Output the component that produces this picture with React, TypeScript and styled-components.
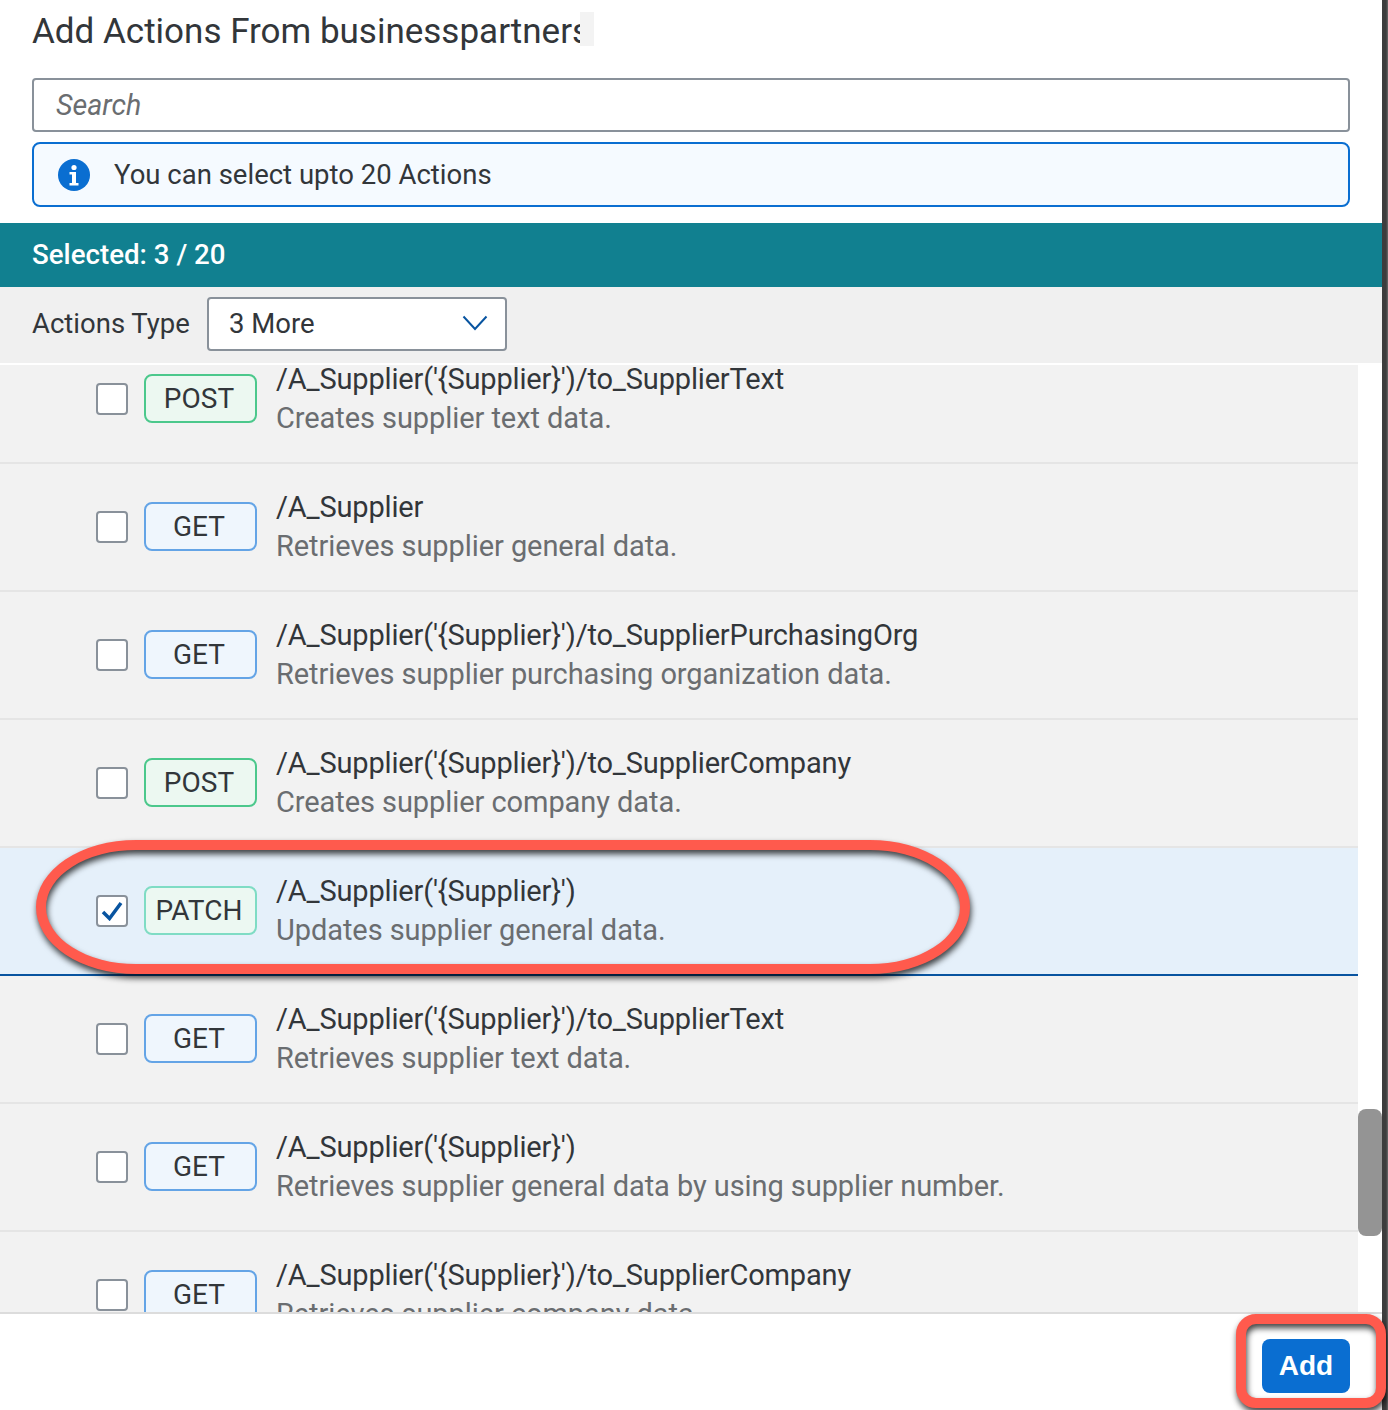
import React from "react";
import styled, { createGlobalStyle } from "styled-components";

const Global = createGlobalStyle`
  html, body { margin: 0; padding: 0; background: #fff; }
  body { font-family: Roboto, "Noto Sans", "Liberation Sans", sans-serif; color: #32363a; }
  * { box-sizing: border-box; }
`;

const Page = styled.div`
  position: relative;
  display: flex;
  width: 1388px;
  height: 1410px;
  overflow: hidden;
`;
const Dialog = styled.div`
  width: 1382px;
  height: 1410px;
  display: flex;
  flex-direction: column;
  background: #fff;
`;
const Edge = styled.div`
  width: 6px;
  background: linear-gradient(90deg, #3d3d3d 0 4px, #6a6a6a 100%);
`;
const Head = styled.div`
  height: 223px;
  padding: 12px 32px 0;
  display: flex;
  flex-direction: column;
`;
const TitleRow = styled.div`
  display: flex;
  height: 34px;
  margin-bottom: 32px;
`;
const Title = styled.h1`
  margin: 0;
  width: 548px;
  height: 40px;
  overflow: hidden;
  white-space: nowrap;
  font-weight: 400;
  font-size: 35px;
  line-height: 40px;
  color: #32363a;
`;
const TitleFade = styled.div`
  width: 14px;
  height: 34px;
  background: #f3f3f3;
`;
const SearchBox = styled.div`
  height: 54px;
  border: 2px solid #89919a;
  border-radius: 4px;
  padding: 0 22px;
  display: flex;
  align-items: center;
  font-style: italic;
  font-size: 28.600px;
  color: #6a6d70;
`;
const Info = styled.div`
  height: 65px;
  margin-top: 10px;
  border: 2px solid #0a6ed1;
  border-radius: 8px;
  background: #f5faff;
  display: flex;
  align-items: center;
  padding-left: 24px;
  gap: 24px;
  font-size: 27.500px;
`;
const SelectedBar = styled.div`
  height: 64px;
  background: #118090;
  color: #fff;
  padding: 0 0 2px 32px;
  display: flex;
  align-items: center;
  font-size: 27.700px;
  font-weight: 500;
`;
const FilterBar = styled.div`
  height: 76px;
  background: #f0f0f0;
  padding: 10px 0 0 32px;
  display: flex;
  align-items: flex-start;
  font-size: 27.500px;
`;
const FilterLabel = styled.span`
  width: 175px;
  line-height: 54px;
`;
const Select = styled.div`
  width: 300px;
  height: 54px;
  border: 2px solid #89919a;
  border-radius: 4px;
  background: #fff;
  display: flex;
  align-items: center;
  justify-content: space-between;
  padding: 0 17px 2px 20px;
`;
const Body = styled.div`
  height: 947px;
  margin-top: 2px;
  display: flex;
`;
const List = styled.div`
  width: 1358px;
  height: 947px;
  overflow: hidden;
`;
const ListInner = styled.div`
  margin-top: -29px;
`;
const Track = styled.div`
  width: 24px;
  padding-top: 744px;
`;
const Thumb = styled.div`
  height: 127px;
  background: #949494;
  border-radius: 8px;
`;
const Row = styled.div<{ $selected?: boolean }>`
  height: 128px;
  background: ${(p) => (p.$selected ? "#e5f0fa" : "#f2f2f2")};
  border-bottom: 2px solid ${(p) => (p.$selected ? "#0854a0" : "#e5e5e5")};
  display: flex;
  align-items: center;
  padding-left: 96px;
`;
const Check = styled.div`
  width: 32px;
  height: 32px;
  border: 2px solid #89919a;
  border-radius: 4px;
  background: #fff;
  margin-right: 16px;
  display: flex;
  align-items: center;
  justify-content: center;
`;
const tagColors: Record<string, [string, string]> = {
  POST: ["#4cc88c", "#ecf8f1"],
  GET: ["#64a4e6", "#eff6fd"],
  PATCH: ["#7fdcc4", "#ecf8f2"],
};
const Tag = styled.div<{ $method: string }>`
  width: 113px;
  height: 49px;
  margin-bottom: 2px;
  padding-right: 3px;
  border: 2px solid ${(p) => tagColors[p.$method][0]};
  background: ${(p) => tagColors[p.$method][1]};
  border-radius: 8px;
  margin-right: 19px;
  display: flex;
  align-items: center;
  justify-content: center;
  font-size: 28px;
`;
const RowText = styled.div`
  display: flex;
  flex-direction: column;
`;
const Path = styled.div`
  font-size: 29px;
  line-height: 39px;
  letter-spacing: -0.170px;
`;
const Desc = styled.div`
  font-size: 29px;
  line-height: 39px;
  letter-spacing: -0.070px;
  color: #6a6d70;
`;
const Footer = styled.div`
  flex: 1;
  border-top: 2px solid #dcdcdc;
  background: #fff;
  display: flex;
  justify-content: flex-end;
  align-items: flex-start;
  padding: 25px 32px 0 0;
`;
const AddButton = styled.button`
  width: 88px;
  height: 54px;
  border: 0;
  border-radius: 8px;
  background: #0a6ed1;
  color: #fff;
  font-family: "Liberation Sans", sans-serif;
  font-size: 28px;
  font-weight: 700;
`;
const Callout = styled.div`
  position: absolute;
  border: 10px solid #ff5a4d;
  filter: drop-shadow(1px 4px 3px rgba(0, 0, 0, 0.75));
  pointer-events: none;
`;
const RowCallout = styled(Callout)`
  left: 36px;
  top: 840px;
  width: 934px;
  height: 134px;
  border-radius: 100px / 67px;
`;
const AddCallout = styled(Callout)`
  left: 1236px;
  top: 1314px;
  width: 150px;
  height: 94px;
  border-radius: 20px;
`;

const rows = [
  { m: "POST", p: "/A_Supplier('{Supplier}')/to_SupplierText", d: "Creates supplier text data." },
  { m: "GET", p: "/A_Supplier", d: "Retrieves supplier general data." },
  { m: "GET", p: "/A_Supplier('{Supplier}')/to_SupplierPurchasingOrg", d: "Retrieves supplier purchasing organization data." },
  { m: "POST", p: "/A_Supplier('{Supplier}')/to_SupplierCompany", d: "Creates supplier company data." },
  { m: "PATCH", p: "/A_Supplier('{Supplier}')", d: "Updates supplier general data.", s: true },
  { m: "GET", p: "/A_Supplier('{Supplier}')/to_SupplierText", d: "Retrieves supplier text data." },
  { m: "GET", p: "/A_Supplier('{Supplier}')", d: "Retrieves supplier general data by using supplier number." },
  { m: "GET", p: "/A_Supplier('{Supplier}')/to_SupplierCompany", d: "Retrieves supplier company data." },
];

export default function App() {
  return (
    <Page>
      <Global />
      <Dialog>
        <Head>
          <TitleRow>
            <Title>Add Actions From businesspartners</Title>
            <TitleFade />
          </TitleRow>
          <SearchBox>Search</SearchBox>
          <Info>
            <svg width="32" height="32" viewBox="0 0 32 32">
              <circle cx="16" cy="16" r="16" fill="#0a6ed1" />
              <circle cx="16" cy="8.500" r="2.600" fill="#fff" />
              <path d="M11.500 13h6.500v11h2.500v2.500h-9V24H14v-8.500h-2.500z" fill="#fff" />
            </svg>
            You can select upto 20 Actions
          </Info>
        </Head>
        <SelectedBar>Selected: 3 / 20</SelectedBar>
        <FilterBar>
          <FilterLabel>Actions Type</FilterLabel>
          <Select>
            3 More
            <svg width="26" height="16" viewBox="0 0 26 16" fill="none">
              <path d="M1.500 1.500 13 14 24.500 1.500" stroke="#0854a0" strokeWidth="2" />
            </svg>
          </Select>
        </FilterBar>
        <Body>
          <List>
            <ListInner>
              {rows.map((r, i) => (
                <Row key={i} $selected={r.s}>
                  <Check>
                    {r.s && (
                      <svg width="22" height="20" viewBox="0 0 22 20" fill="none">
                        <path d="M2 11l6.500 6.500L20 2" stroke="#0854a0" strokeWidth="3.500" />
                      </svg>
                    )}
                  </Check>
                  <Tag $method={r.m}>{r.m}</Tag>
                  <RowText>
                    <Path>{r.p}</Path>
                    <Desc>{r.d}</Desc>
                  </RowText>
                </Row>
              ))}
            </ListInner>
          </List>
          <Track>
            <Thumb />
          </Track>
        </Body>
        <Footer>
          <AddButton>Add</AddButton>
        </Footer>
      </Dialog>
      <Edge />
      <RowCallout />
      <AddCallout />
    </Page>
  );
}
